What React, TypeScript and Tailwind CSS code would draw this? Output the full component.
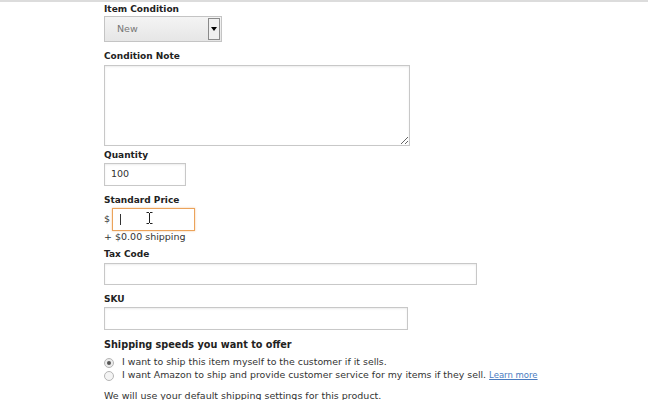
import React from 'react'

const Label = ({ children, className = '' }: { children: React.ReactNode; className?: string }) => (
  <div className={`h-[14px] leading-[14px] text-[9px] font-bold text-[#222] ${className}`}>{children}</div>
)

export default function App() {
  return (
    <div className="w-[648px] h-[400px] overflow-hidden bg-white font-['DejaVu_Sans',Verdana,sans-serif]">
      {/* top rule */}
      <div className="h-[2px] bg-[#dcdcdc]" />

      <div className="pl-[104px] flex flex-col items-start">
        <Label>Item Condition</Label>

        {/* Select */}
        <div className="w-[118px] h-[26px] border border-[#c4c4c4] bg-gradient-to-b from-[#f4f4f4] to-[#e6e6e6] flex items-center">
          <span className="flex-1 pl-[12px] text-[9.5px] text-[#777]">New</span>
          <div className="w-[12px] h-[22px] mr-[1px] border border-[#8a8a8a] bg-[#f0f0f0] flex items-center justify-center">
            <div className="w-0 h-0 border-l-[3px] border-r-[3px] border-t-[4px] border-l-transparent border-r-transparent border-t-black" />
          </div>
        </div>

        <Label className="mt-[7px] mb-[2px]">Condition Note</Label>
        <textarea className="w-[306px] h-[81px] border border-[#c8c8c8] shadow-[inset_0_1px_2px_rgba(0,0,0,0.08)] outline-none" />

        <Label className="mt-[2px] mb-[1px]">Quantity</Label>
        <div className="w-[82px] h-[23px] border border-[#c8c8c8] shadow-[inset_0_1px_2px_rgba(0,0,0,0.08)] flex items-center pl-[6px] text-[9.5px] text-[#333]">
          100
        </div>

        <Label className="mt-[7px] mb-[1px]">Standard Price</Label>
        <div className="flex items-center h-[23px]">
          <span className="text-[9.5px] text-[#333] w-[8px]">$</span>
          <div className="relative w-[83px] h-[23px] border border-[#eba35b] shadow-[0_0_2px_rgba(235,163,91,0.6)] flex items-center pl-[7px]">
            <div className="w-px h-[11px] bg-[#333]" />
            {/* I-beam mouse cursor */}
            <svg className="absolute left-[33px] top-[3px]" width="7" height="12" viewBox="0 0 7 12">
              <path d="M0.5 0.5h2.5M4 0.5h2.5M3.5 1v10M0.5 11.5h2.5M4 11.5h2.5" stroke="#222" strokeWidth="1" fill="none" />
            </svg>
          </div>
        </div>
        <div className="h-[12px] leading-[12px] text-[9.5px] text-[#333]">+ $0.00 shipping</div>

        <Label className="mt-[4px] mb-[2px]">Tax Code</Label>
        <div className="w-[373px] h-[22px] border border-[#c8c8c8] shadow-[inset_0_1px_2px_rgba(0,0,0,0.08)]" />

        <Label className="mt-[7px] mb-[1px]">SKU</Label>
        <div className="w-[304px] h-[23px] border border-[#c8c8c8] shadow-[inset_0_1px_2px_rgba(0,0,0,0.08)]" />

        <div className="mt-[8px] h-[14px] leading-[14px] text-[9.7px] font-bold text-[#222]">
          Shipping speeds you want to offer
        </div>

        <div className="mt-[4px] flex flex-col">
          <div className="h-[13px] flex items-center gap-[8px] text-[9.4px] text-[#333]">
            <span className="w-[10px] h-[10px] rounded-full border border-[#b5b5b5] bg-[#ececec] flex items-center justify-center">
              <span className="w-[4px] h-[4px] rounded-full bg-[#555]" />
            </span>
            I want to ship this item myself to the customer if it sells.
          </div>
          <div className="h-[13px] flex items-center gap-[8px] text-[9.4px] text-[#333]">
            <span className="w-[10px] h-[10px] rounded-full border border-[#b5b5b5] bg-[#f4f4f4]" />
            <span>
              I want Amazon to ship and provide customer service for my items if they sell.
              <span className="ml-[3px] text-[8.5px] text-[#4a7cc0] underline">Learn more</span>
            </span>
          </div>
        </div>

        <div className="mt-[7px] h-[14px] leading-[14px] text-[9.5px] text-[#333]">
          We will use your default shipping settings for this product.
        </div>
      </div>
    </div>
  )
}
